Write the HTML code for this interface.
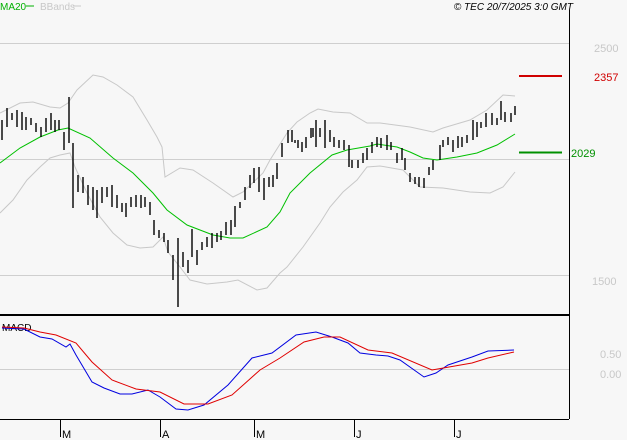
<!DOCTYPE html>
<html><head><style>
html,body{margin:0;padding:0;background:#f7f7f7;}
svg{display:block;font-family:"Liberation Sans",sans-serif;}
</style></head><body>
<svg width="627" height="440" viewBox="0 0 627 440" xmlns="http://www.w3.org/2000/svg">
<rect width="627" height="440" fill="#f7f7f7"/>
<text x="0" y="10" font-size="10" fill="#00b000">MA20</text>
<line x1="26" y1="6" x2="34" y2="6" stroke="#00b000"/>
<text x="40" y="10" font-size="10" fill="#c8c8c8">BBands</text>
<line x1="73" y1="6" x2="81" y2="6" stroke="#c8c8c8"/>
<text x="573" y="10" font-size="10" font-style="italic" fill="#000" text-anchor="end">© TEC 20/7/2025 3:0 GMT</text>
<g stroke="#cfcfcf" stroke-width="1">
<line x1="0" y1="43.5" x2="569" y2="43.5"/>
<line x1="0" y1="159.5" x2="569" y2="159.5"/>
<line x1="0" y1="275.5" x2="569" y2="275.5"/>
<line x1="0" y1="369.5" x2="569" y2="369.5"/>
</g>
<g fill="none" stroke="#c8c8c8" stroke-width="1">
<polyline points="0,113 20,103 33,102 50,107 60,108 68,103 77,90 93,75 103,77 117,85 133,97 147,120 157,137 162,147 165,177 180,168 193,170 213,183 233,197 243,192 263,173 270,160 287,133 297,122 310,113 318,109 333,112 350,113 367,123 380,123 410,127 433,132 443,128 470,120 487,110 503,95 515,96"/>
<polyline points="0,213 13,200 27,180 40,167 50,158 60,155 70,153 75,167 87,193 100,217 113,233 127,245 140,248 153,247 163,237 168,252 180,267 190,280 207,284 227,282 238,280 257,290 267,288 280,273 287,267 303,247 320,223 330,207 343,192 357,180 367,167 380,166 403,170 420,187 443,188 470,192 490,193 503,187 515,172"/>
</g>
<polyline fill="none" stroke="#00c000" stroke-width="1" points="0,163 20,148 40,137 58,130 68,128 90,138 113,158 133,173 153,193 167,210 187,225 213,235 230,238 243,238 267,227 280,212 290,193 310,173 332,155 347,150 370,146 377,144 397,147 410,152 423,158 437,160 457,157 477,153 497,145 515,134"/>
<path fill="none" stroke="#000" stroke-width="1.4" d="M2 120V140M7 108V127M12 113V120M17 110V127M22 112V130M26 117V130M31 118V125M36 123V132M41 127V137M46 118V132M51 113V130M55 120V132M59 120V130M64 132V150M69 97V143M73 143V208M78 175V192M83 177V193M88 185V205M93 187V210M97 190V218M102 187V203M107 187V197M112 185V207M117 195V208M122 203V212M126 203V217M131 197V207M136 195V207M141 195V208M145 197V207M150 202V215M154 220V235M159 230V238M164 233V242M168 240V253M173 255V280M178 238V307M183 252V267M188 260V273M192 229V257M197 250V265M202 242V250M207 237V247M212 233V248M217 233V242M221 231V240M226 222V235M231 220V235M235 206V227M240 202V208M245 187V200M250 175V188M254 168V183M259 167V192M264 178V200M269 177V187M273 175V187M277 163V179M282 143V157M288 130V143M292 130V142M295 140V143M298 140V148M302 142V152M306 137V148M311 128V138M313 128V137M316 120V147M320 128V137M325 120V148M330 130V142M334 137V147M339 140V148M344 140V150M349 145V167M352 160V168M358 160V168M363 153V163M367 148V160M372 142V153M377 137V147M381 138V148M387 135V150M391 142V150M397 153V163M402 148V160M405 158V170M410 173V182M415 177V184M419 177V187M424 178V188M429 167V175M433 160V170M440 145V160M443 140V147M448 137V145M453 140V152M458 136V148M462 137V147M467 135V143M473 120V140M477 122V137M481 122V128M486 113V127M492 113V125M497 118V125M501 101V120M505 112V122M511 113V122M515 106V115"/>
<line x1="519" y1="76" x2="562" y2="76" stroke="#d00000" stroke-width="2"/>
<line x1="519" y1="152.5" x2="562" y2="152.5" stroke="#009000" stroke-width="2"/>
<text x="594" y="52" font-size="11" fill="#c8c8c8">2500</text>
<text x="594" y="81" font-size="11" fill="#d00000">2357</text>
<text x="571" y="157" font-size="11" fill="#009000">2029</text>
<text x="592" y="285" font-size="11" fill="#c8c8c8">1500</text>
<line x1="0" y1="315" x2="569" y2="315" stroke="#000" stroke-width="2"/>
<line x1="569.5" y1="10" x2="569.5" y2="419" stroke="#000" stroke-width="1"/>
<line x1="0" y1="419.5" x2="569" y2="419.5" stroke="#000" stroke-width="1"/>
<text x="2" y="331" font-size="10" fill="#000">MACD</text>
<polyline fill="none" stroke="#0000e0" stroke-width="1" points="2,328 24,329 40,337 52,339 66,347 70,344 76,355 92,382 104,388 120,394 132,394 148,390 160,397 176,409 188,410 204,405 228,385 252,358 272,353 296,335 316,332 332,337 348,343 360,353 376,355 388,356 400,360 424,377 436,373 448,365 472,357 488,351 514,350"/>
<polyline fill="none" stroke="#e00000" stroke-width="1" points="2,327 24,328 40,332 56,335 76,343 92,362 112,380 136,389 160,392 184,404 208,404 232,395 260,370 280,358 304,342 324,337 340,337 368,350 392,353 432,370 472,363 488,358 514,352"/>
<text x="600" y="358" font-size="11" fill="#c8c8c8">0.50</text>
<text x="600" y="378" font-size="11" fill="#c8c8c8">0.00</text>
<g stroke="#000" stroke-width="1">
<line x1="60.5" y1="419" x2="60.5" y2="437"/>
<line x1="160.5" y1="419" x2="160.5" y2="437"/>
<line x1="254.5" y1="419" x2="254.5" y2="437"/>
<line x1="354.5" y1="419" x2="354.5" y2="437"/>
<line x1="454.5" y1="419" x2="454.5" y2="437"/>
</g>
<g font-size="11" fill="#000">
<text x="62" y="438">M</text>
<text x="162" y="438">A</text>
<text x="256" y="438">M</text>
<text x="356" y="438">J</text>
<text x="456" y="438">J</text>
</g>
</svg>
</body></html>
